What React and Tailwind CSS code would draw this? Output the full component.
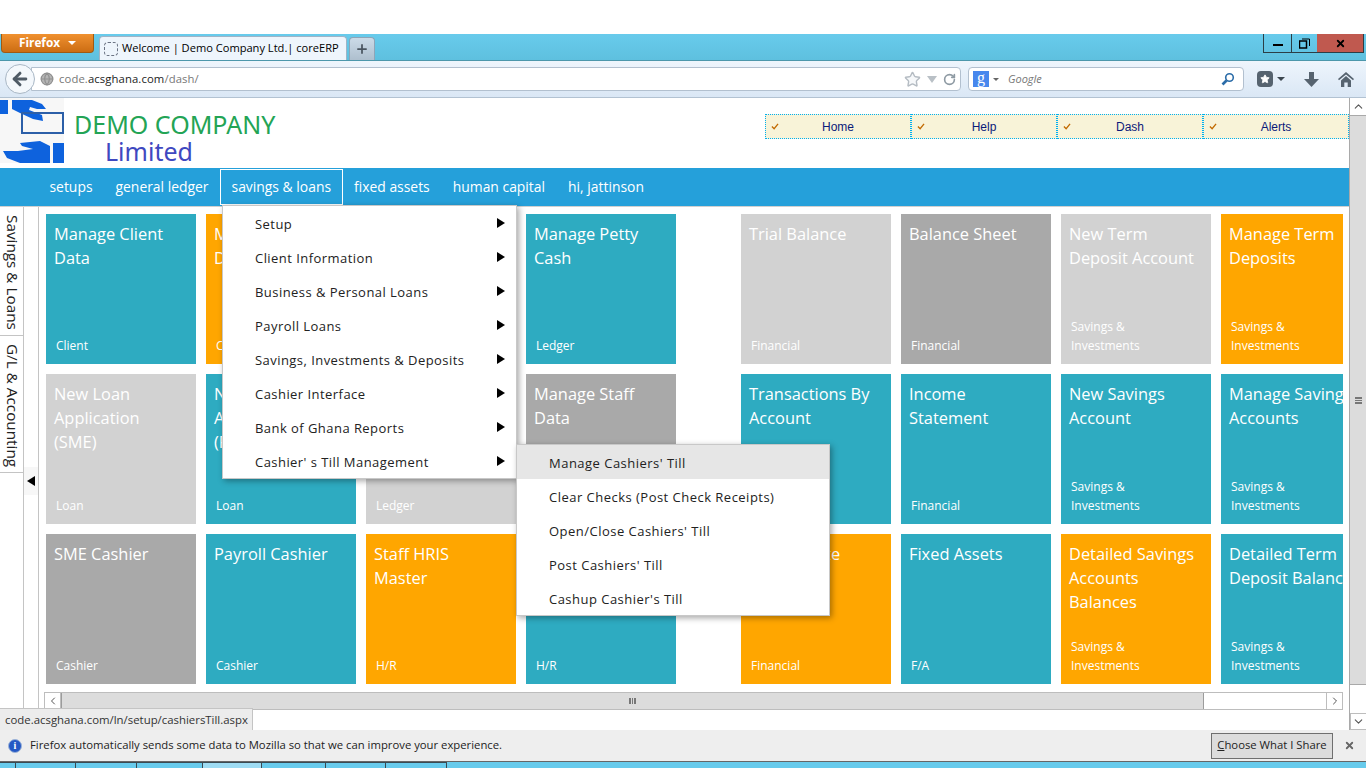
import { ArrowLeft, ChevronDown, ChevronLeft, ChevronRight, ChevronUp, Globe, Plus, RotateCw, Star, X } from "lucide-react";

const UI = "font-['Open_Sans',sans-serif]";

const tileColors = {
    teal: "bg-[#2eabc1]",
    orange: "bg-[#ffa600]",
    light: "bg-[#d2d2d2]",
    dark: "bg-[#a9a9a9]",
};

const leftTiles = [
    ["Manage Client Data", "Client", "teal"],
    ["Manage Client Documents", "Client", "orange"],
    ["Manage Journal Entries", "Ledger", "teal"],
    ["Manage Petty Cash", "Ledger", "teal"],
    ["New Loan Application (SME)", "Loan", "light"],
    ["New Loan Application (Payroll)", "Loan", "teal"],
    ["Post Journal Entries", "Ledger", "light"],
    ["Manage Staff Data", "H/R", "dark"],
    ["SME Cashier", "Cashier", "dark"],
    ["Payroll Cashier", "Cashier", "teal"],
    ["Staff HRIS Master", "H/R", "orange"],
    ["Staff Payroll", "H/R", "teal"],
];

const rightTiles = [
    ["Trial Balance", "Financial", "light"],
    ["Balance Sheet", "Financial", "dark"],
    ["New Term Deposit Account", "Savings & Investments", "light"],
    ["Manage Term Deposits", "Savings & Investments", "orange"],
    ["Transactions By Account", "Financial", "teal"],
    ["Income Statement", "Financial", "teal"],
    ["New Savings Account", "Savings & Investments", "teal"],
    ["Manage Savings Accounts", "Savings & Investments", "teal"],
    ["Ledger Rate", "Financial", "orange"],
    ["Fixed Assets", "F/A", "teal"],
    ["Detailed Savings Accounts Balances", "Savings & Investments", "orange"],
    ["Detailed Term Deposit\u00a0Balances", "Savings & Investments", "teal"],
];

const navItems = ["setups", "general ledger", "savings & loans", "fixed assets", "human capital", "hi, jattinson"];

const mainMenu = [
    "Setup",
    "Client Information",
    "Business & Personal Loans",
    "Payroll Loans",
    "Savings, Investments & Deposits",
    "Cashier Interface",
    "Bank of Ghana Reports",
    "Cashier' s Till Management",
];

const tillMenu = [
    "Manage Cashiers' Till",
    "Clear Checks (Post Check Receipts)",
    "Open/Close Cashiers' Till",
    "Post Cashiers' Till",
    "Cashup Cashier's Till",
];

function Tile({ title, tag, color }) {
    return (
        <div className={`relative h-[150px] w-[150px] shrink-0 overflow-hidden ${tileColors[color]} text-white`}>
            <div className="pl-2 pr-3 pt-2 text-[16.4px] leading-6">{title}</div>
            <div className="absolute bottom-[9px] left-[10px] w-[100px] text-xs leading-[19px]">{tag}</div>
        </div>
    );
}

function TitleBar() {
    return (
        <div className="flex h-[26px] bg-gradient-to-b from-[#68cbec] to-[#5ec0df]">
            <div className="ml-px flex h-[19px] w-[93px] items-center justify-center gap-2 rounded-b-sm border border-t-0 border-[#a05a12] bg-gradient-to-b from-[#f0912f] to-[#cc6d12] text-[11.8px] font-bold text-white">
                Firefox
                <span className="h-0 w-0 border-x-4 border-t-4 border-x-transparent border-t-white" />
            </div>
            <div className="ml-[5px] mt-0.5 flex h-6 w-[248px] items-center gap-1 rounded-t-sm border border-b-0 border-[#9fb4c6] bg-[#eef5fc] pl-[4px] text-[11.1px] text-black">
                <span className="h-[14px] w-[14px] shrink-0 rounded-sm border border-dashed border-gray-500" />
                <span className="whitespace-nowrap">Welcome | Demo Company Ltd.| coreERP</span>
            </div>
            <div className="ml-0.5 mt-[3px] flex h-[23px] w-[26px] items-center justify-center rounded-t-sm border border-b-0 border-[#8ea5b8] bg-gradient-to-b from-[#ccdbe8] to-[#aebfce]">
                <Plus size={14} strokeWidth={3} className="text-[#4a5560]" />
            </div>
            <div className="ml-auto mr-0.5 flex h-[19px] border border-t-0 border-[#2c3e46]">
                <div className="flex w-[28px] items-center justify-center border-r border-[#2c3e46]">
                    <span className="mt-1 h-0.5 w-[10px] bg-black" />
                </div>
                <div className="flex w-[25px] items-center justify-center">
                    <svg width="11" height="11" viewBox="0 0 11 11" fill="none" stroke="black">
                        <rect x="0.5" y="3" width="7" height="7" strokeWidth="1.5" />
                        <path d="M3 1h7.5v7" strokeWidth="1" />
                    </svg>
                </div>
                <div className="flex w-[46px] items-center justify-center bg-[#c0594f]">
                    <X size={11} strokeWidth={4} className="text-black" />
                </div>
            </div>
        </div>
    );
}

function NavBar() {
    return (
        <div className="flex h-[38px] items-center border-y border-y-[#b2c2d2] border-t-[#4c97ab] bg-gradient-to-b from-[#eef5fc] to-[#dae7f5] pl-[5px] pr-2">
            <div className="z-10 flex h-[30px] w-[30px] items-center justify-center rounded-full border border-[#a9b7c5] bg-[#f4f8fc]">
                <ArrowLeft size={20} strokeWidth={3.5} className="text-[#4f5b66]" />
            </div>
            <div className="-ml-1 flex h-6 w-[930px] items-center rounded-r-sm border border-[#b2c0cf] bg-white pl-2 pr-1">
                <Globe size={14} fill="#b5b5b5" className="text-[#8f8f8f]" />
                <span className="ml-[5px] text-[11.3px] tracking-[0.1px] text-[#777]">
                    code.<span className="text-[#222]">acsghana.com</span>/dash/
                </span>
                <div className="ml-auto flex items-center gap-1.5">
                    <Star size={17} fill="#f6f8fa" className="text-[#b5bcc3]" />
                    <span className="h-0 w-0 border-x-[5px] border-t-[7px] border-x-transparent border-t-[#b9c0c6]" />
                    <RotateCw size={13} strokeWidth={3} className="text-[#8e9aa3]" />
                </div>
            </div>
            <div className="ml-[7px] flex h-6 w-[276px] items-center rounded-sm border border-[#b2c0cf] bg-white pl-1 pr-2">
                <span className="flex h-4 w-4 items-center justify-center bg-[#4787ed] pb-0.5 font-['Liberation_Serif',serif] text-base leading-none text-white">g</span>
                <span className="ml-1 h-0 w-0 border-x-[3px] border-t-[3px] border-x-transparent border-t-[#666]" />
                <span className="ml-[9px] text-[11px] italic text-[#777]">Google</span>
                <svg width="14" height="14" viewBox="0 0 14 14" fill="none" stroke="#2b6ca8" className="ml-auto">
                    <circle cx="8.5" cy="5.5" r="3.8" strokeWidth="1.6" />
                    <path d="M5.5 8.5 1.5 12.5" strokeWidth="2.6" />
                </svg>
            </div>
            <div className="ml-[13px] flex h-4 w-4 items-center justify-center rounded-sm bg-[#56636f]">
                <Star size={10} fill="white" className="text-white" />
            </div>
            <span className="ml-1 h-0 w-0 border-x-[4px] border-t-[4px] border-x-transparent border-t-[#3c4750]" />
            <svg width="15" height="15" viewBox="0 0 15 15" fill="#56636f" className="ml-[19px]">
                <path d="M5 0h5v7h5l-7.5 8L0 7h5z" />
            </svg>
            <svg width="16" height="15" viewBox="0 0 16 15" className="ml-[19px]">
                <path d="M8 0 16 7l-1 1.2L8 2.4 1 8.2 0 7z" fill="#56636f" />
                <path d="M3 8.5 8 4l5 4.5V15H9.7v-4.5H6.3V15H3z" fill="#56636f" />
            </svg>
        </div>
    );
}

function Logo() {
    return (
        <svg width="64" height="65" viewBox="0 0 64 65" className="shrink-0">
            <rect width="64" height="65" fill="#f7f7f7" />
            <path d="M0 2h8v14H0z" fill="#0e62dd" />
            <path d="M12 2h20l10 4 4 5-9 0-7-2-1 3 13 5 1 6-10-2-13-6-8-4z" fill="#0e62dd" />
            <rect x="22" y="15" width="41" height="20" fill="none" stroke="#2c5fa8" strokeWidth="2" />
            <path d="M20 45 40 43 50 48V65H20L7 60 3 53H18L33 51 22 48z" fill="#0e62dd" />
            <path d="M53 45h11v20H53z" fill="#0e62dd" />
        </svg>
    );
}

function Header() {
    return (
        <div className="flex h-[70px] shrink-0">
            <Logo />
            <div className="ml-[10px] pt-[13px] font-['Noto_Sans',sans-serif] text-[25px] leading-[27px]">
                <div className="text-[#23a455]">DEMO COMPANY</div>
                <div className="pl-[31px] text-[#3f48c0]">Limited</div>
            </div>
            <div className="ml-auto mt-4 flex h-[25px]">
                {["Home", "Help", "Dash", "Alerts"].map((label) => (
                    <div key={label} className="relative flex w-[146px] items-center justify-center border border-dotted border-[#00b0f0] bg-[#f8f3d8] font-['Liberation_Sans',sans-serif] text-xs text-[#0b1a7a]">
                        <svg width="8" height="7" viewBox="0 0 9 8" className="absolute left-[5px] top-[8px]" fill="none" stroke="#c26a00" strokeWidth="1.5">
                            <path d="M1 4l2.5 2.5L8 1" />
                        </svg>
                        {label}
                    </div>
                ))}
            </div>
        </div>
    );
}

function MainNav() {
    return (
        <div className="flex h-[38px] shrink-0 items-start bg-[#25a0da] pl-[38px] pt-px text-[13.9px] text-white">
            {navItems.map((item) => (
                <div key={item} className={`flex h-9 items-center px-[10.5px] pt-px ${item === "savings & loans" ? "border border-white" : "border border-transparent"}`}>
                    {item}
                </div>
            ))}
        </div>
    );
}

function Menus() {
    return (
        <>
            <div className="absolute left-[222px] top-[205px] w-[295px] border border-[#c8c8c8] bg-white shadow-[2px_2px_6px_rgba(0,0,0,0.35)]">
                {mainMenu.map((item) => (
                    <div key={item} className="flex h-[34px] items-center pl-[32px] pr-[11px] text-[13px] tracking-[0.45px] text-[#222]">
                        <span className="mt-1">{item}</span>
                        <span className="ml-auto h-0 w-0 border-y-[5px] border-l-[8px] border-y-transparent border-l-black" />
                    </div>
                ))}
            </div>
            <div className="absolute left-[516px] top-[444px] w-[314px] border border-[#c8c8c8] bg-white shadow-[2px_2px_6px_rgba(0,0,0,0.35)]">
                {tillMenu.map((item, i) => (
                    <div key={item} className={`flex h-[34px] items-center pl-[32px] text-[13px] tracking-[0.48px] text-[#222] ${i === 0 ? "bg-[#e6e6e6]" : ""}`}>
                        <span className="mt-1">{item}</span>
                    </div>
                ))}
            </div>
        </>
    );
}

function SideTabs() {
    return (
        <div className="flex w-[39px] shrink-0">
            <div className="w-6 shrink-0 border-r border-[#c4c4c4]">
                <div className="flex h-[129px] items-center border-b border-[#c4c4c4] pl-[2px] pt-2 [writing-mode:vertical-rl] text-[15.3px] leading-[22px] text-[#222]">
                    Savings &amp; Loans
                </div>
                <div className="flex h-[137px] items-center border-b border-[#c4c4c4] pl-[2px] pt-2 [writing-mode:vertical-rl] text-[15.3px] leading-[22px] text-[#222]">
                    G/L &amp; Accounting
                </div>
            </div>
            <div className="w-[15px] shrink-0 border-r border-[#c4c4c4] pt-[260px]">
                <div className="flex h-7 items-center justify-center bg-[#f7f7f7]">
                    <span className="h-0 w-0 border-y-[5px] border-r-[8px] border-y-transparent border-r-black" />
                </div>
            </div>
        </div>
    );
}

function HScrollBar() {
    return (
        <div className="mt-2 flex h-[18px] w-[1299px] border border-[#bdbdbd] bg-white">
            <div className="flex w-4 items-center justify-center border-r border-[#bdbdbd]">
                <ChevronLeft size={12} strokeWidth={2} className="text-[#555]" />
            </div>
            <div className="flex w-[1143px] items-center justify-center border-x border-[#9c9c9c] bg-[#dcdcdc]">
                <span className="h-[6px] w-[7px] border-x-2 border-[#777] bg-[linear-gradient(90deg,transparent_1px,#777_1px,#777_2px,transparent_2px)]" />
            </div>
            <div className="ml-auto flex w-4 items-center justify-center border-l border-[#bdbdbd]">
                <ChevronRight size={12} strokeWidth={2} className="text-[#555]" />
            </div>
        </div>
    );
}

function VScrollBar() {
    return (
        <div className="flex w-[17px] shrink-0 flex-col border-l border-[#a9a9a9] bg-white">
            <div className="flex h-[17px] shrink-0 items-center justify-center">
                <ChevronUp size={13} className="text-[#555]" />
            </div>
            <div className="flex h-[570px] shrink-0 items-center justify-center border-y border-[#a9a9a9] bg-[#dcdcdc]">
                <span className="h-[7px] w-[7px] border-y-2 border-[#777] bg-[linear-gradient(180deg,transparent_1px,#777_1px,#777_2px,transparent_2px)]" />
            </div>
            <div className="flex-1" />
            <div className="flex h-[17px] shrink-0 items-center justify-center border border-r-0 border-[#bdbdbd]">
                <ChevronDown size={13} className="text-[#555]" />
            </div>
        </div>
    );
}

function Notification() {
    return (
        <div className="flex h-[32px] shrink-0 items-center border-b border-[#666] bg-[#eeeeee] pl-2 pr-[11px] text-[11.3px] text-[#222]">
            <span className="flex h-[14px] w-[14px] items-center justify-center rounded-full border border-[#9db4d8] bg-[#2458c4] font-['Liberation_Serif',serif] text-[10px] font-bold text-white">i</span>
            <span className="ml-2">Firefox automatically sends some data to Mozilla so that we can improve your experience.</span>
            <div className="ml-auto flex h-[26px] w-[122px] items-center justify-center border border-[#6f6f6f] bg-[#dcdcdc]">
                <span className="underline decoration-1">C</span>hoose What I Share
            </div>
            <X size={11} strokeWidth={4} className="ml-[11px] text-[#666]" />
        </div>
    );
}

function Taskbar() {
    return (
        <div className="flex h-[6px] flex-1 bg-[#68cbec]">
            {[16, 60, 61, 66, 59, 64, 60, 61].map((w, i) => (
                <div key={i} style={{ width: w }} className={`border-r border-t border-[#3a4a52] ${i === 4 ? "bg-[#9edcf3]" : ""}`} />
            ))}
        </div>
    );
}

export default function App() {
    return (
        <div className={`relative flex h-screen w-full flex-col overflow-hidden bg-white ${UI}`}>
            <div className="h-[34px] shrink-0 bg-white" />
            <TitleBar />
            <NavBar />
            <div className="flex h-[632px] shrink-0">
                <div className="flex min-w-0 flex-1 flex-col">
                    <Header />
                    <MainNav />
                    <div className="flex flex-1 border-t border-[#d0d0d0]">
                        <SideTabs />
                        <div className="ml-[5px] flex w-[1299px] flex-col">
                            <div className="h-[477px] w-[1299px] shrink-0 overflow-hidden pt-[7px]">
                                <div className="flex w-[1320px] gap-[65px] pl-[2px]">
                                    <div className="grid w-[630px] shrink-0 grid-cols-4 gap-[10px]">
                                        {leftTiles.map(([title, tag, color]) => (
                                            <Tile key={title} title={title} tag={tag} color={color} />
                                        ))}
                                    </div>
                                    <div className="grid w-[630px] shrink-0 grid-cols-4 gap-[10px]">
                                        {rightTiles.map(([title, tag, color]) => (
                                            <Tile key={title} title={title} tag={tag} color={color} />
                                        ))}
                                    </div>
                                </div>
                            </div>
                            <HScrollBar />
                        </div>
                    </div>
                </div>
                <VScrollBar />
            </div>
            <Notification />
            <Taskbar />
            <Menus />
            <div className="absolute left-0 top-[708px] flex h-[22px] w-[253px] items-center border-r border-t border-[#c4c4c4] bg-[#ececec] pl-[5px] text-[11.4px] text-[#333]">
                code.acsghana.com/ln/setup/cashiersTill.aspx
            </div>
        </div>
    );
}
